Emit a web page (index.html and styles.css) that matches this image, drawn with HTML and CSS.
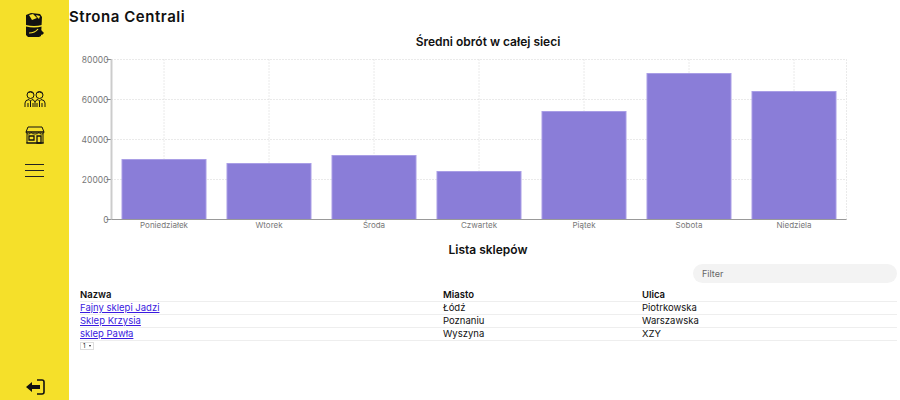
FILE: index.html
```html
<!DOCTYPE html>
<html lang="pl">
<head>
    <meta charset="UTF-8">
    <title>Strona Centrali</title>
    <link rel="stylesheet" href="styles.css">
</head>
<body>
    <aside class="sidebar">
        <svg class="logo" width="20" height="26" viewBox="0 0 20 26">
            <path d="M1 3 L6 1 L15 2 L17 5 L16 24 L14 25 L3 25 L1 23 Z" fill="#111"/>
            <path d="M4 3 L8 2 L12 6 L7 8 Z" fill="#f5e02a"/>
            <path d="M11 3 L15 4 L14 7 L12 5 Z" fill="#f5e02a"/>
            <path d="M1 13 Q9 15 17 13 L17 14.500 Q9 16.500 1 14.500 Z" fill="#f5e02a"/>
            <path d="M4 21 Q10 21 13 17" fill="none" stroke="#f5e02a" stroke-width="1.200"/>
            <path d="M16 18 L19 21 L17 23 L15 22 Z" fill="#111"/>
        </svg>

        <svg class="nav-icon people" width="22" height="18" viewBox="0 0 22 18" fill="none" stroke="#111" stroke-width="1">
            <circle cx="6.500" cy="5" r="3.500"/>
            <circle cx="15.500" cy="5" r="3.500"/>
            <path d="M3 4 Q6 0 10 4 M12 4 Q15 0 19 4"/>
            <path d="M1 17 V13 Q1 10 5 9.500 L6.500 11 L8 9.500 Q10.500 10 11 12 Q11.500 10 14 9.500 L15.500 11 L17 9.500 Q21 10 21 13 V17"/>
            <path d="M4 13 V17 M6.500 11 V17 M9 13 V17 M11 12 V17 M13 13 V17 M15.500 11 V17 M18 13 V17"/>
        </svg>

        <svg class="nav-icon shop" width="20" height="18" viewBox="0 0 20 18" fill="none" stroke="#111" stroke-width="1">
            <path d="M3 1 H17 L19 6 Q19 8 16.500 8 Q14.500 8 14 6.500 Q13 8 10 8 Q7 8 6 6.500 Q5.500 8 3.500 8 Q1 8 1 6 Z"/>
            <path d="M1 6 H19" stroke-width="1.500"/>
            <path d="M2 8 V17 H18 V8 M1 17 H19"/>
            <path d="M4 10 H9 V14 H4 Z M12 10 H16 V17 H12 Z" stroke-width="1.300"/>
        </svg>

        <div class="burger"><span></span><span></span><span></span></div>

        <svg class="logout" width="20" height="16" viewBox="0 0 20 16">
            <path d="M12 1 H17 Q19 1 19 3 V13 Q19 15 17 15 H12" fill="none" stroke="#111" stroke-width="1.600"/>
            <path d="M1 8 L7 3 V6 H15 V10 H7 V13 Z" fill="#111"/>
        </svg>
    </aside>

    <main class="main">
        <h1 class="page-title">Strona Centrali</h1>

        <h2 class="section-title chart-title">Średni obrót w całej sieci</h2>
        <svg class="chart" id="chart" width="831" height="188"></svg>

        <h2 class="section-title list-title">Lista sklepów</h2>
        <div class="filter-row">
            <input class="filter" type="text" placeholder="Filter">
        </div>
        <table class="shops">
            <thead>
                <tr><th class="col-name">Nazwa</th><th class="col-city">Miasto</th><th>Ulica</th></tr>
            </thead>
            <tbody>
                <tr><td><a href="#">Fajny sklepi Jadzi</a></td><td>Łódź</td><td>Piotrkowska</td></tr>
                <tr><td><a href="#">Sklep Krzysia</a></td><td>Poznaniu</td><td>Warszawska</td></tr>
                <tr><td><a href="#">sklep Pawła</a></td><td>Wyszyna</td><td>XZY</td></tr>
            </tbody>
        </table>
        <div class="pager"><span class="page-num">1</span><span class="page-arrow"></span></div>
    </main>

    <script>
        // dane wykresu
        const data = [
            { day: "Poniedziałek", value: 30000 },
            { day: "Wtorek", value: 28000 },
            { day: "Środa", value: 32000 },
            { day: "Czwartek", value: 24000 },
            { day: "Piątek", value: 54000 },
            { day: "Sobota", value: 73000 },
            { day: "Niedziela", value: 64000 }
        ];

        const chart = document.getElementById("chart");
        const left = 42.5, top0 = 4.5, plotW = 735, plotH = 160, step = 105, barW = 84;
        let out = "";

        function line(x1, y1, x2, y2, cls) {
            return `<line class="${cls}" x1="${x1}" y1="${y1}" x2="${x2}" y2="${y2}"/>`;
        }

        [0, 20000, 40000, 60000, 80000].forEach(v => {
            const y = top0 + plotH - v / 500;
            if (v > 0) out += line(left, y, left + plotW, y, "grid");
            out += line(left - 5, y, left, y, "tick");
            out += `<text class="label" x="${left - 3}" y="${y + 3.500}" text-anchor="end">${v}</text>`;
        });
        out += line(left + plotW, top0, left + plotW, top0 + plotH, "grid");

        data.forEach((d, i) => {
            const cx = left + step * i + step / 2;
            out += line(cx, top0, cx, top0 + plotH, "grid");
        });

        data.forEach((d, i) => {
            const cx = left + step * i + step / 2;
            const h = d.value / 500;
            out += `<rect class="bar" x="${cx - barW / 2}" y="${top0 + plotH - h}" width="${barW}" height="${h}"/>`;
            out += `<text class="label day-label" x="${cx}" y="${top0 + plotH + 8.500}" text-anchor="middle">${d.day}</text>`;
        });

        out += line(left, top0, left, top0 + plotH, "axis-y");
        out += line(left, top0 + plotH, left + plotW, top0 + plotH, "axis-x");
        chart.innerHTML = out;
    </script>
</body>
</html>
```

FILE: styles.css
```css
html, body {
    height: 100%;
}

body {
    display: flex;
    margin: 0;
    font-family: Inter, "Liberation Sans", sans-serif;
    color: #111;
    background-color: #fff;
    overflow: hidden;
}

.sidebar {
    display: flex;
    flex-direction: column;
    align-items: center;
    flex: 0 0 69px;
    box-sizing: border-box;
    height: 400px;
    padding-top: 12px;
    background-color: #f5e02a;
}

.logo {
    margin-bottom: 52px;
}

.nav-icon {
    display: block;
}

.people {
    margin-bottom: 18px;
}

.burger {
    display: flex;
    flex-direction: column;
    gap: 5px;
    width: 19px;
    margin-top: 20px;
}

.burger span {
    height: 1px;
    background-color: #222;
}

.logout {
    margin-top: auto;
    margin-bottom: 5px;
}

.main {
    flex: 1;
    min-width: 0;
}

.page-title {
    margin: 8px 0 0;
    font-size: 15px;
    line-height: 18px;
    font-weight: 600;
    letter-spacing: 0.55px;
}

.section-title {
    margin: 0;
    font-size: 12px;
    line-height: 14px;
    font-weight: 600;
    text-align: center;
}

.chart-title {
    margin-top: 9px;
    padding-left: 7px;
}

.chart {
    display: block;
    margin-top: 6px;
}

.grid {
    stroke: #d4d4d4;
    stroke-width: 1;
    stroke-dasharray: 1 2;
}

.tick {
    stroke: #888;
}

.axis-x {
    stroke: #999;
}

.axis-y {
    stroke: #ccc;
    stroke-width: 2;
}

.bar {
    fill: #8a7dd8;
    stroke: #a99ee6;
}

.label {
    font-size: 8.5px;
    fill: #777;
}

.day-label {
    font-size: 8px;
}

.list-title {
    padding-left: 7px;
}

.filter-row {
    display: flex;
    justify-content: flex-end;
    margin-top: 7px;
    padding-right: 3px;
}

.filter {
    box-sizing: border-box;
    width: 204px;
    height: 19px;
    padding: 0 9px;
    border: 0;
    border-radius: 10px;
    background-color: #f3f3f3;
    font-family: inherit;
    font-size: 9px;
}

.filter::placeholder {
    color: #666;
}

.shops {
    width: 817px;
    margin: 6px 0 0 11px;
    border-collapse: collapse;
    font-size: 9.5px;
}

.shops th,
.shops td {
    height: 12px;
    padding: 0;
    border-bottom: 1px solid #eee;
    text-align: left;
    line-height: 12px;
}

.shops th {
    font-weight: 600;
}

.col-name {
    width: 363px;
}

.col-city {
    width: 199px;
}

.shops a {
    color: #3a1ae0;
}

.pager {
    display: flex;
    align-items: center;
    justify-content: space-between;
    box-sizing: border-box;
    width: 14px;
    height: 8px;
    margin: 1px 0 0 11px;
    padding: 0 2px;
    border: 1px solid #ddd;
    font-size: 6px;
    line-height: 6px;
}

.page-arrow {
    border-left: 1.500px solid transparent;
    border-right: 1.500px solid transparent;
    border-top: 2px solid #222;
}
```
